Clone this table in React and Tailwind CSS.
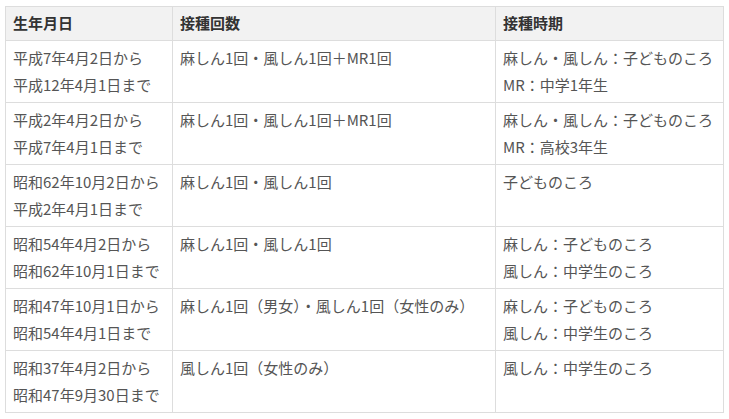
import React from "react";

const rows = [
  {
    birth: ["平成7年4月2日から", "平成12年4月1日まで"],
    count: "麻しん1回・風しん1回＋MR1回",
    time: ["麻しん・風しん：子どものころ", "MR：中学1年生"],
  },
  {
    birth: ["平成2年4月2日から", "平成7年4月1日まで"],
    count: "麻しん1回・風しん1回＋MR1回",
    time: ["麻しん・風しん：子どものころ", "MR：高校3年生"],
  },
  {
    birth: ["昭和62年10月2日から", "平成2年4月1日まで"],
    count: "麻しん1回・風しん1回",
    time: ["子どものころ"],
  },
  {
    birth: ["昭和54年4月2日から", "昭和62年10月1日まで"],
    count: "麻しん1回・風しん1回",
    time: ["麻しん：子どものころ", "風しん：中学生のころ"],
  },
  {
    birth: ["昭和47年10月1日から", "昭和54年4月1日まで"],
    count: "麻しん1回（男女）・風しん1回（女性のみ）",
    time: ["麻しん：子どものころ", "風しん：中学生のころ"],
  },
  {
    birth: ["昭和37年4月2日から", "昭和47年9月30日まで"],
    count: "風しん1回（女性のみ）",
    time: ["風しん：中学生のころ"],
  },
];

export default function App() {
  return (
    <div
      className="bg-white w-[729px] h-[419px] pl-[5px] pt-[6px] text-[#555]"
      style={{ fontFamily: '"Noto Sans CJK JP", "Noto Sans", sans-serif' }}
    >
      <table className="w-[718px] border-collapse text-[15px] table-fixed">
        <colgroup>
          <col className="w-[167px]" />
          <col className="w-[323px]" />
          <col className="w-[228px]" />
        </colgroup>
        <thead>
          <tr className="bg-[#f2f2f2] text-[#333]">
            <th className="border border-[#ddd] h-[34px] px-[7px] text-left font-bold">生年月日</th>
            <th className="border border-[#ddd] h-[34px] px-[7px] text-left font-bold">接種回数</th>
            <th className="border border-[#ddd] h-[34px] px-[7px] text-left font-bold">接種時期</th>
          </tr>
        </thead>
        <tbody>
          {rows.map((r, i) => (
            <tr key={i}>
              <td className="border border-[#ddd] align-top px-[7px] pt-[3px] pb-[4px] leading-[27px] h-[62px]">
                {r.birth.map((l) => (
                  <div key={l}>{l}</div>
                ))}
              </td>
              <td className="border border-[#ddd] align-top px-[7px] pt-[3px] pb-[4px] leading-[27px]">
                {r.count}
              </td>
              <td className="border border-[#ddd] align-top px-[7px] pt-[3px] pb-[4px] leading-[27px]">
                {r.time.map((l) => (
                  <div key={l}>{l}</div>
                ))}
              </td>
            </tr>
          ))}
        </tbody>
      </table>
    </div>
  );
}
